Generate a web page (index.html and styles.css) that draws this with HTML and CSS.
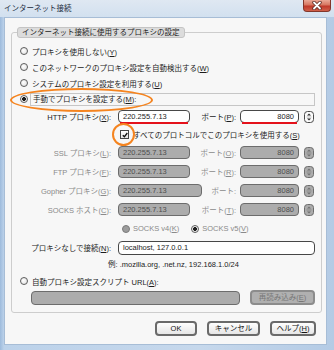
FILE: index.html
```html
<!DOCTYPE html>
<html lang="ja">
<head>
<meta charset="utf-8">
<title>インターネット接続</title>
<link rel="stylesheet" href="styles.css">
</head>
<body>
<div class="window">
  <div class="titlebar">
    <span class="title">インターネット接続</span>
    <div class="close">
      <svg width="12" height="9" viewBox="0 0 12 9"><path class="x-out" d="M3 1.5 9 7.5M9 1.5 3 7.5"/><path class="x-in" d="M3 1.5 9 7.5M9 1.5 3 7.5"/></svg>
    </div>
  </div>
  <div class="client">
    <fieldset class="group">
      <legend class="legend">インターネット接続に使用するプロキシの設定</legend>
      <div class="radio-row"><span class="radio"></span><span>プロキシを使用しない(<u>Y</u>)</span></div>
      <div class="radio-row"><span class="radio"></span><span>このネットワークのプロキシ設定を自動検出する(<u>W</u>)</span></div>
      <div class="radio-row"><span class="radio"></span><span>システムのプロキシ設定を利用する(<u>U</u>)</span></div>
      <div class="radio-row"><span class="radio on"></span><span class="boxed">手動でプロキシを設定する(<u>M</u>):</span></div>

      <div class="field-row">
        <span class="lbl">HTTP プロキシ(<u>X</u>):</span>
        <span class="input host marked">220.255.7.13</span>
        <span class="plbl">ポート(<u>P</u>):</span>
        <span class="input port marked">8080</span>
        <svg class="spin" width="10" height="12" viewBox="0 0 10 12"><rect x=".5" y=".5" width="9" height="11" rx="3"/><path class="sep" d="M2.5 6h5"/><path class="arr" d="M5 2.4 7 4.6H3z"/><path class="arr" d="M5 9.6 7 7.4H3z"/></svg>
      </div>
      <div class="check-row"><span class="check"><svg width="6" height="6" viewBox="0 0 6 6"><path d="M.8 3.2 2.4 4.8 5.3 1"/></svg></span><span>すべてのプロトコルでこのプロキシを使用する(<u>S</u>)</span></div>

      <div class="field-row off">
        <span class="lbl">SSL プロキシ(<u>L</u>):</span>
        <span class="input host">220.255.7.13</span>
        <span class="plbl">ポート(<u>O</u>):</span>
        <span class="input port">8080</span>
        <svg class="spin" width="10" height="12" viewBox="0 0 10 12"><rect x=".5" y=".5" width="9" height="11" rx="3"/><path class="sep" d="M2.5 6h5"/><path class="arr" d="M5 2.4 7 4.6H3z"/><path class="arr" d="M5 9.6 7 7.4H3z"/></svg>
      </div>
      <div class="field-row off">
        <span class="lbl">FTP プロキシ(<u>F</u>):</span>
        <span class="input host">220.255.7.13</span>
        <span class="plbl">ポート(<u>R</u>):</span>
        <span class="input port">8080</span>
        <svg class="spin" width="10" height="12" viewBox="0 0 10 12"><rect x=".5" y=".5" width="9" height="11" rx="3"/><path class="sep" d="M2.5 6h5"/><path class="arr" d="M5 2.4 7 4.6H3z"/><path class="arr" d="M5 9.6 7 7.4H3z"/></svg>
      </div>
      <div class="field-row off">
        <span class="lbl">Gopher プロキシ(<u>G</u>):</span>
        <span class="input host wide">220.255.7.13</span>
        <span class="plbl">ポート:</span>
        <span class="input port">8080</span>
        <svg class="spin" width="10" height="12" viewBox="0 0 10 12"><rect x=".5" y=".5" width="9" height="11" rx="3"/><path class="sep" d="M2.5 6h5"/><path class="arr" d="M5 2.4 7 4.6H3z"/><path class="arr" d="M5 9.6 7 7.4H3z"/></svg>
      </div>
      <div class="field-row off">
        <span class="lbl">SOCKS ホスト(<u>C</u>):</span>
        <span class="input host">220.255.7.13</span>
        <span class="plbl">ポート(<u>T</u>):</span>
        <span class="input port">8080</span>
        <svg class="spin" width="10" height="12" viewBox="0 0 10 12"><rect x=".5" y=".5" width="9" height="11" rx="3"/><path class="sep" d="M2.5 6h5"/><path class="arr" d="M5 2.4 7 4.6H3z"/><path class="arr" d="M5 9.6 7 7.4H3z"/></svg>
      </div>
      <div class="socks-row">
        <span class="opt dis"><span class="radio"></span><span>SOCKS v4(<u>K</u>)</span></span>
        <span class="opt dis"><span class="radio on"></span><span>SOCKS v5(<u>V</u>)</span></span>
      </div>
      <div class="field-row noproxy">
        <span class="lbl">プロキシなしで接続(<u>N</u>):</span>
        <span class="input fill">localhost, 127.0.0.1</span>
      </div>
      <div class="example">例: .mozilla.org, .net.nz, 192.168.1.0/24</div>
      <div class="radio-row"><span class="radio"></span><span>自動プロキシ設定スクリプト URL(<u>A</u>):</span></div>
      <div class="url-row">
        <span class="input url"></span>
        <span class="btn disabled">再読み込み(<u>E</u>)</span>
      </div>
    </fieldset>
    <div class="buttons">
      <span class="btn ok">OK</span>
      <span class="btn cancel">キャンセル</span>
      <span class="btn help">ヘルプ(<u>H</u>)</span>
    </div>
  </div>
  <div class="mark ellipse"></div>
  <div class="mark ring"></div>
</div>
</body>
</html>
```
FILE: styles.css
```css
* { box-sizing: border-box; }
html, body { margin: 0; padding: 0; }
body {
  width: 334px;
  height: 350px;
  overflow: hidden;
  font-family: "Liberation Sans", "Noto Sans CJK JP", sans-serif;
  font-size: 7.5px;
  color: #1c1c1c;
}
u { text-decoration: underline; text-underline-offset: 1px; }

.window {
  position: relative;
  width: 334px;
  height: 350px;
  display: flex;
  flex-direction: column;
  background: linear-gradient(to right, #9ebbdc 0, #bcd2ea 4px, #c6d8ec 60%, #b4cbe5 100%);
}
.titlebar {
  height: 17px;
  flex: none;
  display: flex;
  align-items: flex-start;
  background: linear-gradient(to bottom, #dfe8f2, #d2e0ef);
}
.title {
  margin: 4px 0 0 4px;
  line-height: 10px;
  color: #1b2a3d;
}
.close {
  margin-left: auto;
  margin-right: 3px;
  width: 28px;
  height: 12px;
  border: 1px solid #83362a;
  border-top: none;
  border-radius: 0 0 4px 4px;
  background: linear-gradient(to bottom, #eaa896 0, #d77660 45%, #c0392a 55%, #d0604a 100%);
  display: flex;
  align-items: center;
  justify-content: center;
}
.close svg { display: block; }
.x-out { stroke: #5a2a22; stroke-width: 3.4; fill: none; stroke-linecap: round; }
.x-in { stroke: #fff; stroke-width: 1.8; fill: none; stroke-linecap: round; }

.client {
  margin: 0 7px 5px 4px;
  flex: 1;
  background: #f7f7f7;
  border: 1px solid #a7bdd6;
  display: flex;
  flex-direction: column;
}
.group {
  margin: 9px 4px 0 6px;
  padding: 0 0 6px 0;
  border: 1px solid #cdcdcd;
  border-radius: 3px;
  min-width: 0;
}
.legend {
  margin-left: 5px;
  padding: 0 4px;
  line-height: 9px;
  background: #dcdcdc;
  border: 1px solid #c4c4c4;
  border-radius: 3px;
  color: #1c1c1c;
}

.radio-row {
  height: 16px;
  display: flex;
  align-items: center;
  padding-left: 8px;
}
.radio-row:first-of-type { margin-top: 5px; }
.radio {
  flex: none;
  width: 8px;
  height: 8px;
  margin-right: 4px;
  border-radius: 50%;
  border: 1px solid #5c5c5c;
  background: radial-gradient(circle at 40% 40%, #ffffff, #dcdcdc);
}
.radio.on {
  background: radial-gradient(circle at center, #1a1a1a 0 1.7px, #f2f2f2 2.2px);
}
.boxed {
  flex: 1;
  margin-left: -2px;
  margin-right: 6px;
  height: 13px;
  line-height: 11px;
  padding-left: 2px;
  border: 1px solid #c6c6c6;
}

.field-row {
  height: 19px;
  display: flex;
  align-items: center;
  padding-right: 7px;
}
.lbl {
  flex: none;
  width: 99px;
  text-align: right;
  white-space: nowrap;
}
.input {
  flex: none;
  height: 13px;
  margin-left: 7px;
  padding: 0 4px;
  line-height: 11px;
  border: 1px solid #474747;
  border-radius: 4px;
  background: #fff;
  white-space: nowrap;
  overflow: hidden;
}
.host { width: 72px; }
.host.wide { width: 84px; }
.plbl {
  flex: 1;
  text-align: right;
  padding-right: 4px;
  white-space: nowrap;
}
.port {
  width: 59px;
  margin-left: 0;
  text-align: right;
}
.spin { flex: none; margin-left: 5px; display: block; }
.spin rect { fill: #fbfbfb; stroke: #4a4a4a; }
.spin .sep { stroke: #9a9a9a; stroke-width: .6; fill: none; }
.spin .arr { fill: #2a2a2a; }

.marked { position: relative; overflow: visible; }
.marked::after {
  content: "";
  position: absolute;
  left: 1px;
  right: 1px;
  bottom: -2px;
  height: 2px;
  background: #e4121b;
}

.off .lbl, .off .plbl { color: #8a8a8a; }
.off .input {
  background: #acacac;
  border-color: #6c6c6c;
  color: #4e4e4e;
}
.off .spin rect { fill: #acacac; stroke: #6c6c6c; }
.off .spin .arr { fill: #707070; }
.off .spin .sep { stroke: #777; }

.check-row {
  height: 17px;
  display: flex;
  align-items: center;
  padding-left: 108px;
}
.check {
  flex: none;
  width: 9px;
  height: 9px;
  margin-right: 4px;
  border: 1px solid #454545;
  background: linear-gradient(#fff, #e4e4e4);
  display: flex;
  align-items: center;
  justify-content: center;
}
.check svg { display: block; }
.check path { fill: none; stroke: #111; stroke-width: 1.4; }

.socks-row {
  height: 19px;
  display: flex;
  align-items: center;
  gap: 12px;
  padding-left: 110px;
}
.opt { display: flex; align-items: center; }
.opt .radio { margin-right: 3px; }
.opt.dis { color: #8a8a8a; }
.opt.dis .radio { background: #9c9c9c; border-color: #7a7a7a; }
.opt.dis .radio.on { background: radial-gradient(circle at center, #1e1e1e 0 1.7px, #f0f0f0 2.2px); border-color: #5c5c5c; }

.noproxy { padding-right: 6px; }
.fill { flex: 1; height: 14px; line-height: 12px; }

.example {
  height: 16px;
  line-height: 16px;
  padding-left: 96px;
}

.url-row {
  height: 17px;
  display: flex;
  align-items: center;
  padding: 0 6px 0 19px;
}
.url {
  margin-left: 0;
  width: 209px;
  height: 14px;
  background: #acacac;
  border-color: #6c6c6c;
}

.btn {
  flex: none;
  height: 15px;
  line-height: 11px;
  text-align: center;
  border: 2px solid #6a6a6a;
  border-radius: 4px;
  background: linear-gradient(#fefefe, #e6e6e6);
  color: #141414;
  white-space: nowrap;
}
.btn.disabled {
  margin-left: 10px;
  width: 65px;
  height: 15px;
  background: #b0b0b0;
  border-color: #8c8c8c;
  color: #777;
}
.buttons {
  display: flex;
  justify-content: flex-end;
  gap: 10px;
  margin-top: 8px;
  padding-right: 10px;
}
.ok { width: 42px; }
.cancel { width: 53px; }
.help { width: 46px; }

.mark {
  position: absolute;
  border: 2.5px solid #f5841f;
  border-radius: 50%;
}
.ellipse { left: 10px; top: 88px; width: 143px; height: 24px; }
.ring { left: 112px; top: 123px; width: 23px; height: 23px; }
```
